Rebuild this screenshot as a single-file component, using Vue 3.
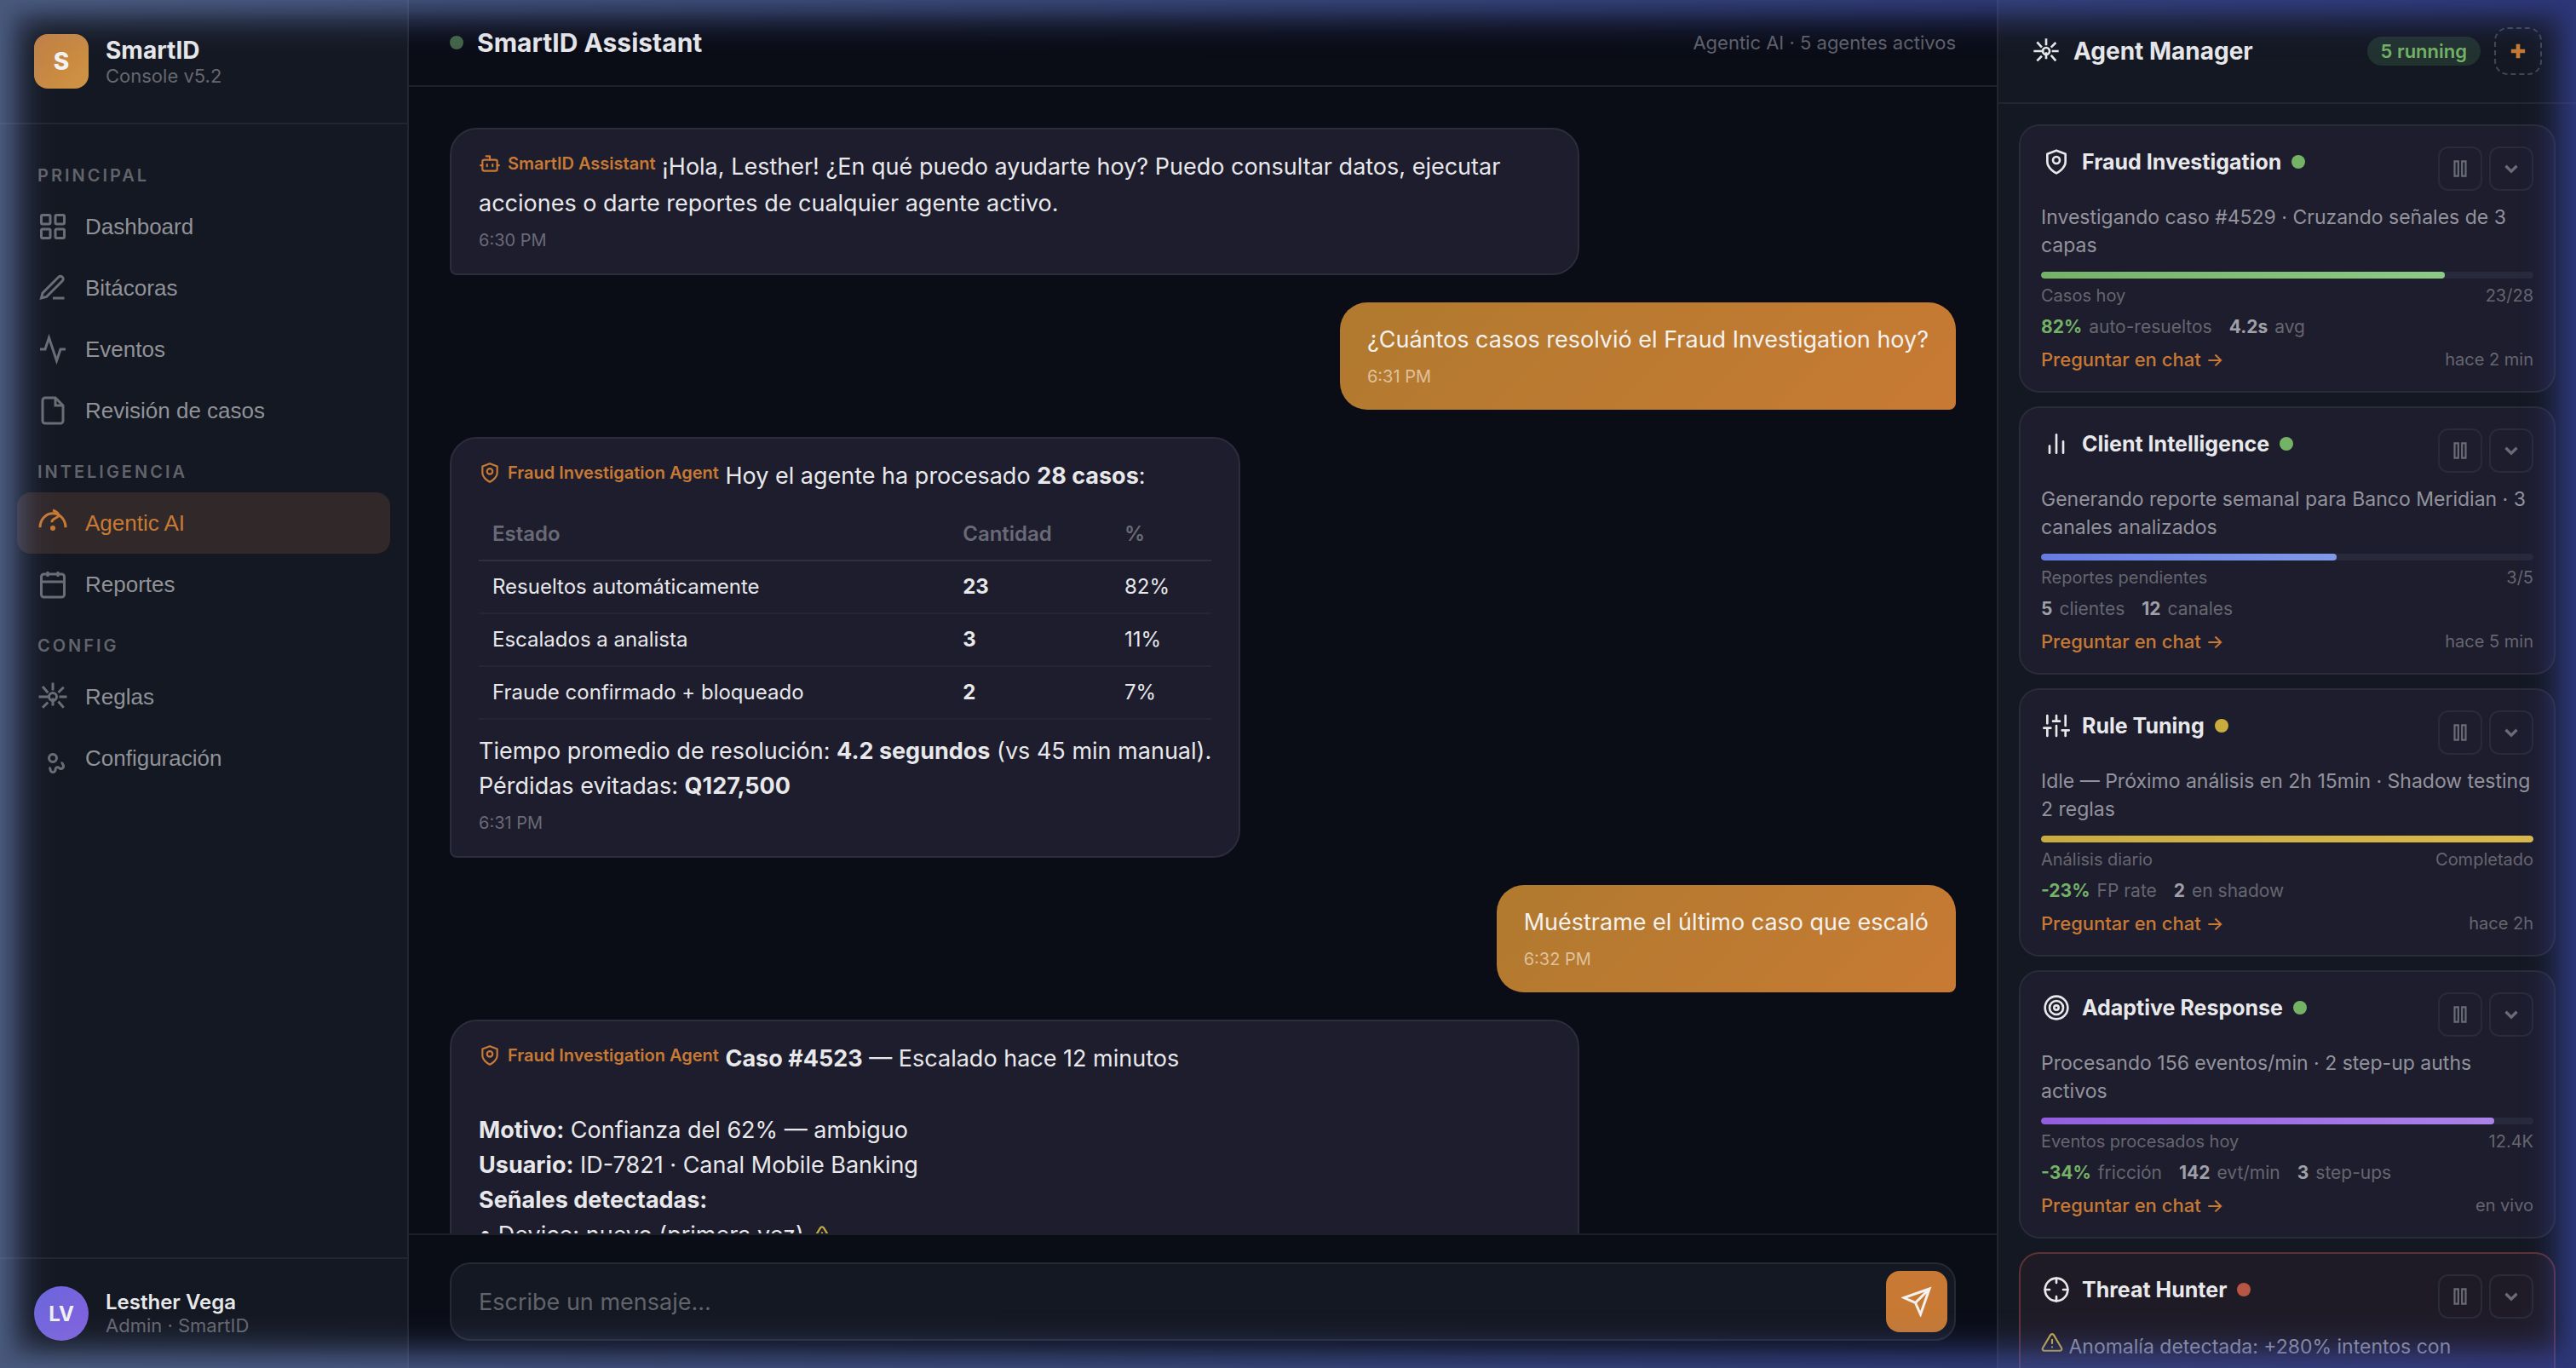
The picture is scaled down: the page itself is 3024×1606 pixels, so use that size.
<script setup>
import { ref } from 'vue'

const icons = {
  grid: '<rect x="3" y="3" width="7" height="7" rx="1"/><rect x="14" y="3" width="7" height="7" rx="1"/><rect x="3" y="14" width="7" height="7" rx="1"/><rect x="14" y="14" width="7" height="7" rx="1"/>',
  edit: '<path d="M12 20h9"/><path d="M16.5 3.5a2.12 2.12 0 0 1 3 3L7 19l-4 1 1-4z"/>',
  pulse: '<path d="M22 12h-4l-3 9L9 3l-3 9H2"/>',
  file: '<path d="M14 2H6a2 2 0 0 0-2 2v16a2 2 0 0 0 2 2h12a2 2 0 0 0 2-2V8z"/><path d="M14 2v6h6"/>',
  gauge: '<path d="M2 15.5a10 11 0 0 1 20 0"/><path d="M12 2c3 1 5 3 4.600 4.600L12 9.500c-.8.6-.8 1.200-.6 2"/><circle cx="12" cy="16" r="2" fill="currentColor" stroke="none"/>',
  calendar: '<rect x="3" y="4" width="18" height="18" rx="2"/><path d="M16 2v4M8 2v4M3 10h18"/>',
  spark: '<circle cx="12" cy="12" r="3"/><path d="M12 1v6M12 13v6M1 12h9M17 12h6M4 4l4.200 4.800M20.500 4.500l-4.200 4.200M4 20.500l4.200-4.200M20.500 20.500l-4.200-4.800"/>',
  gear: '<circle cx="12" cy="12" r="3"/><path d="M19.4 15a1.65 1.65 0 0 0 .33 1.82l.06.06a2 2 0 0 1 0 2.83 2 2 0 0 1-2.83 0l-.06-.06a1.65 1.65 0 0 0-1.82-.33 1.65 1.65 0 0 0-1 1.510V21a2 2 0 0 1-2 2 2 2 0 0 1-2-2v-.09A1.65 1.65 0 0 0 9 19.400"/>',
  bot: '<path d="M12 8V4H8"/><rect x="4" y="8" width="16" height="12" rx="2"/><path d="M2 14h2M20 14h2M15 13v2M9 13v2"/>',
  shield: '<path d="M12 22s8-4 8-10V5l-8-3-8 3v7c0 6 8 10 8 10z"/><circle cx="12" cy="10.500" r="3"/>',
  bars: '<path d="M18 20V10M12 20V4M6 20v-6"/>',
  sliders: '<path d="M4 21v-7M4 10V3M12 21v-9M12 8V3M20 21v-5M20 12V3M1 14h6M9 8h6M17 16h6"/>',
  target: '<circle cx="12" cy="12" r="10"/><circle cx="12" cy="12" r="6"/><circle cx="12" cy="12" r="2"/>',
  crosshair: '<circle cx="12" cy="12" r="10"/><path d="M22 12h-4M6 12H2M12 6V2M12 22v-4"/>',
  warning: '<path d="M10.29 3.860 1.820 18a2 2 0 0 0 1.710 3h16.940a2 2 0 0 0 1.710-3L13.710 3.860a2 2 0 0 0-3.420 0z"/><path d="M12 9v4M12 17h.01"/>',
}

const navGroups = [
  {
    title: 'Principal',
    items: [
      { label: 'Dashboard', icon: 'grid' },
      { label: 'Bitácoras', icon: 'edit' },
      { label: 'Eventos', icon: 'pulse' },
      { label: 'Revisión de casos', icon: 'file' },
    ],
  },
  {
    title: 'Inteligencia',
    items: [
      { label: 'Agentic AI', icon: 'gauge' },
      { label: 'Reportes', icon: 'calendar' },
    ],
  },
  {
    title: 'Config',
    items: [
      { label: 'Reglas', icon: 'spark' },
      { label: 'Configuración', icon: 'gear' },
    ],
  },
]
const current = ref('Agentic AI')
const draft = ref('')

const results = [
  { state: 'Resueltos automáticamente', count: 23, share: '82%' },
  { state: 'Escalados a analista', count: 3, share: '11%' },
  { state: 'Fraude confirmado + bloqueado', count: 2, share: '7%' },
]

const agents = [
  {
    name: 'Fraud Investigation', icon: 'shield', status: 'green',
    task: 'Investigando caso #4529 · Cruzando señales de 3 capas',
    bar: 'green', progress: 82, metric: 'Casos hoy', value: '23/28',
    stats: [{ n: '82%', t: 'auto-resueltos', good: true }, { n: '4.2s', t: 'avg' }],
    time: 'hace 2 min',
  },
  {
    name: 'Client Intelligence', icon: 'bars', status: 'green',
    task: 'Generando reporte semanal para Banco Meridian · 3 canales analizados',
    bar: 'blue', progress: 60, metric: 'Reportes pendientes', value: '3/5',
    stats: [{ n: '5', t: 'clientes' }, { n: '12', t: 'canales' }],
    time: 'hace 5 min',
  },
  {
    name: 'Rule Tuning', icon: 'sliders', status: 'yellow',
    task: 'Idle — Próximo análisis en 2h 15min · Shadow testing 2 reglas',
    bar: 'yellow', progress: 100, metric: 'Análisis diario', value: 'Completado',
    stats: [{ n: '-23%', t: 'FP rate', good: true }, { n: '2', t: 'en shadow' }],
    time: 'hace 2h',
  },
  {
    name: 'Adaptive Response', icon: 'target', status: 'green',
    task: 'Procesando 156 eventos/min · 2 step-up auths activos',
    bar: 'purple', progress: 92, metric: 'Eventos procesados hoy', value: '12.4K',
    stats: [{ n: '-34%', t: 'fricción', good: true }, { n: '142', t: 'evt/min' }, { n: '3', t: 'step-ups' }],
    time: 'en vivo',
  },
  {
    name: 'Threat Hunter', icon: 'crosshair', status: 'red', alert: true,
    task: 'Anomalía detectada: +280% intentos con',
  },
]
</script>

<template>
  <div class="app">
    <aside class="sidebar">
      <div class="brand">
        <div class="logo">S</div>
        <div>
          <div class="brand-name">SmartID</div>
          <div class="sub">Console v5.2</div>
        </div>
      </div>
      <nav class="nav">
        <template v-for="group in navGroups" :key="group.title">
          <h2 class="nav-title">{{ group.title }}</h2>
          <button
            v-for="item in group.items"
            :key="item.label"
            type="button"
            class="nav-item"
            :class="{ active: item.label === current }"
            @click="current = item.label"
          >
            <svg class="icon nav-icon" viewBox="0 0 24 24" aria-hidden="true" v-html="icons[item.icon]"></svg>
            {{ item.label }}
          </button>
        </template>
      </nav>
      <div class="user">
        <div class="avatar">LV</div>
        <div>
          <div class="user-name">Lesther Vega</div>
          <div class="sub">Admin · SmartID</div>
        </div>
      </div>
    </aside>

    <main class="chat">
      <header class="chat-head">
        <span class="dot online"></span>
        <h1 class="chat-title">SmartID Assistant</h1>
        <span class="chat-info">Agentic AI · 5 agentes activos</span>
      </header>

      <section class="messages">
        <article class="bubble bot">
          <span class="tag"><svg class="icon round tag-icon" viewBox="0 0 24 24" aria-hidden="true" v-html="icons.bot"></svg>SmartID Assistant</span>
          ¡Hola, Lesther! ¿En qué puedo ayudarte hoy? Puedo consultar datos, ejecutar acciones o darte reportes de cualquier agente activo.
          <div class="time">6:30 PM</div>
        </article>

        <article class="bubble me">
          ¿Cuántos casos resolvió el Fraud Investigation hoy?
          <div class="time">6:31 PM</div>
        </article>

        <article class="bubble bot">
          <span class="tag"><svg class="icon round tag-icon" viewBox="0 0 24 24" aria-hidden="true" v-html="icons.shield"></svg>Fraud Investigation Agent</span>
          Hoy el agente ha procesado <strong>28 casos</strong>:
          <table class="results">
            <thead>
              <tr><th>Estado</th><th>Cantidad</th><th>%</th></tr>
            </thead>
            <tbody>
              <tr v-for="row in results" :key="row.state">
                <td>{{ row.state }}</td>
                <td><strong>{{ row.count }}</strong></td>
                <td>{{ row.share }}</td>
              </tr>
            </tbody>
          </table>
          Tiempo promedio de resolución: <strong>4.2 segundos</strong> (vs 45 min manual).<br />
          Pérdidas evitadas: <strong>Q127,500</strong>
          <div class="time">6:31 PM</div>
        </article>

        <article class="bubble me">
          Muéstrame el último caso que escaló
          <div class="time">6:32 PM</div>
        </article>

        <article class="bubble bot wide">
          <span class="tag"><svg class="icon round tag-icon" viewBox="0 0 24 24" aria-hidden="true" v-html="icons.shield"></svg>Fraud Investigation Agent</span>
          {{ ' ' }}<strong>Caso #4523</strong> — Escalado hace 12 minutos<br /><br />
          <strong>Motivo:</strong> Confianza del 62% — ambiguo<br />
          <strong>Usuario:</strong> ID-7821 · Canal Mobile Banking<br />
          <strong>Señales detectadas:</strong><br />
          • Device: nuevo (primera vez)
          <svg class="icon round inline-warn" viewBox="0 0 24 24" aria-hidden="true" v-html="icons.warning"></svg>
        </article>
      </section>

      <form class="composer" @submit.prevent="draft = ''">
        <div class="field">
          <input v-model="draft" type="text" placeholder="Escribe un mensaje..." aria-label="Mensaje" />
          <button type="submit" class="send" aria-label="Enviar">
            <svg class="icon" viewBox="0 0 24 24" aria-hidden="true"><path d="M22 2 11 13M22 2l-7 20-4-9-9-4z" /></svg>
          </button>
        </div>
      </form>
    </main>

    <aside class="panel">
      <header class="panel-head">
        <svg class="icon panel-icon" viewBox="0 0 24 24" aria-hidden="true" v-html="icons.spark"></svg>
        <h2 class="panel-title">Agent Manager</h2>
        <span class="badge">5 running</span>
        <button type="button" class="add" aria-label="Agregar agente">
          <svg class="icon" viewBox="0 0 24 24" aria-hidden="true"><path d="M12 5v14M5 12h14" /></svg>
        </button>
      </header>
      <div class="agents">
        <article v-for="agent in agents" :key="agent.name" class="card" :class="{ danger: agent.alert }">
          <div class="card-head">
            <div class="card-name">
              <span class="card-icon"><svg class="icon round" viewBox="0 0 24 24" aria-hidden="true" v-html="icons[agent.icon]"></svg></span>
              <h3>{{ agent.name }}</h3>
              <span class="dot" :class="agent.status"></span>
            </div>
            <div class="card-actions">
              <button type="button" aria-label="Pausar">
                <svg class="icon" viewBox="0 0 24 24" aria-hidden="true"><path d="M6 4h4v16H6zM14 4h4v16h-4z" /></svg>
              </button>
              <button type="button" aria-label="Expandir">
                <svg class="icon chevron" viewBox="0 0 24 24" aria-hidden="true"><path d="m6 9 6 6 6-6" /></svg>
              </button>
            </div>
          </div>
          <p class="task">
            <svg v-if="agent.alert" class="icon round warn-icon" viewBox="0 0 24 24" aria-hidden="true" v-html="icons.warning"></svg>
            {{ agent.task }}
          </p>
          <template v-if="agent.bar">
            <div class="track"><div class="fill" :class="agent.bar" :style="{ width: agent.progress + '%' }"></div></div>
            <div class="metric"><span>{{ agent.metric }}</span><span>{{ agent.value }}</span></div>
            <div class="stats">
              <span v-for="stat in agent.stats" :key="stat.t" class="stat">
                <strong :class="{ good: stat.good }">{{ stat.n }}</strong>{{ stat.t }}
              </span>
            </div>
            <div class="card-foot">
              <a href="#chat">Preguntar en chat →</a>
              <span>{{ agent.time }}</span>
            </div>
          </template>
        </article>
      </div>
    </aside>

    <div class="glow"></div>
  </div>
</template>

<style>
body {
  margin: 0;
  background: #0a0c16;
}
</style>

<style scoped>
* {
  box-sizing: border-box;
}
.app {
  display: flex;
  height: 100vh;
  overflow: hidden;
  background: #0a0c16;
  color: #e8e8ea;
  font-family: Inter, "Noto Sans", sans-serif;
  -webkit-font-smoothing: antialiased;
}
h1, h2, h3, p {
  margin: 0;
}
button {
  margin: 0;
  padding: 0;
  cursor: pointer;
}
.icon {
  flex: none;
  fill: none;
  stroke: currentColor;
  stroke-width: 2;
}
.round {
  stroke-linecap: round;
  stroke-linejoin: round;
}
.dot {
  flex: none;
  width: 16px;
  height: 16px;
  border-radius: 50%;
}

/* Sidebar */
.sidebar {
  display: flex;
  flex: none;
  flex-direction: column;
  width: 480px;
  background: #141822;
  border-right: 2px solid #23252f;
}
.brand {
  display: flex;
  align-items: center;
  gap: 20px;
  padding: 40px;
  border-bottom: 2px solid #23252f;
}
.logo {
  display: grid;
  place-items: center;
  width: 64px;
  height: 64px;
  border-radius: 16px;
  background: linear-gradient(135deg, #c47f3c, #cf9445);
  color: #f2f2f2;
  font-size: 28px;
  font-weight: 800;
}
.brand-name {
  font-size: 28px;
  font-weight: 700;
  line-height: 34px;
}
.sub {
  color: #66676f;
  font-size: 22px;
  line-height: 27px;
}
.nav {
  flex: 1;
  padding: 24px 20px;
}
.nav-title {
  padding: 24px 24px 12px;
  color: #62636b;
  font-size: 20px;
  font-weight: 600;
  letter-spacing: 3px;
  line-height: 24px;
  text-transform: uppercase;
}
.nav-item {
  display: flex;
  align-items: center;
  gap: 20px;
  width: 100%;
  height: 72px;
  padding: 0 24px;
  border: 0;
  border-radius: 16px;
  background: none;
  color: #919298;
  font: 26px "Liberation Sans", Arial, sans-serif;
  text-align: left;
}
.nav-icon {
  width: 36px;
  height: 36px;
  opacity: 0.7;
}
.nav-item.active {
  background: #31282a;
  color: #c87a34;
}
.active .nav-icon {
  opacity: 1;
}
.user {
  display: flex;
  align-items: center;
  gap: 20px;
  padding: 32px 40px;
  border-top: 2px solid #23252f;
}
.avatar {
  display: grid;
  place-items: center;
  width: 64px;
  height: 64px;
  border-radius: 50%;
  background: linear-gradient(135deg, #6a66dc, #8462de);
  color: #f2f2f2;
  font-size: 24px;
  font-weight: 700;
}
.user-name {
  font-size: 24px;
  font-weight: 600;
  line-height: 29px;
}

/* Chat */
.chat {
  display: flex;
  flex: 1;
  flex-direction: column;
  min-width: 0;
}
.chat-head {
  display: flex;
  align-items: center;
  gap: 16px;
  padding: 32px 48px;
  border-bottom: 2px solid #1c1e28;
}
.online {
  background: #436345;
}
.chat-title {
  font-size: 30px;
  font-weight: 700;
  line-height: 36px;
}
.chat-info {
  margin-left: auto;
  color: #5f6069;
  font-size: 22px;
}
.messages {
  display: flex;
  flex: 1;
  flex-direction: column;
  align-items: flex-start;
  gap: 32px;
  min-height: 0;
  padding: 48px 48px 0;
  overflow: hidden;
}
.bubble {
  flex: none;
  max-width: 75%;
  padding: 23px 32px 24px;
  border-radius: 32px;
  font-size: 27px;
  line-height: 41px;
}
.bot {
  border: 2px solid #2c2d3b;
  border-bottom-left-radius: 8px;
  background: #1d1d2e;
}
.me {
  align-self: flex-end;
  border-bottom-right-radius: 8px;
  background: linear-gradient(135deg, #b07a2e, #c87a34);
  color: #f4f1ee;
}
.wide {
  width: 75%;
}
.tag {
  display: inline-flex;
  align-items: center;
  gap: 8px;
  margin-bottom: 10px;
  color: #c87a34;
  font-size: 20px;
  font-weight: 600;
  line-height: 32px;
}
.tag-icon,
.warn-icon {
  width: 26px;
  height: 26px;
}
.warn-icon,
.inline-warn {
  color: #c4aa42;
}
.inline-warn {
  width: 28px;
  height: 28px;
  vertical-align: -6px;
}
.time {
  margin-top: 8px;
  color: #6a6a76;
  font-size: 20px;
  line-height: 30px;
}
.me .time {
  color: #dfc19c;
}
.results {
  width: 100%;
  margin: 16px 0;
  border-collapse: collapse;
  font-size: 24px;
  line-height: 36px;
}
.results th,
.results td {
  padding: 12px 16px;
  border-bottom: 2px solid #252634;
  text-align: left;
}
.results th {
  border-bottom-color: #2f303e;
  color: #6a6a76;
  font-weight: 600;
}
.composer {
  padding: 32px 48px;
  border-top: 2px solid #1c1e28;
}
.field {
  display: flex;
  align-items: center;
  padding: 8px 8px 8px 32px;
  border: 2px solid #262833;
  border-radius: 24px;
  background: #141822;
}
.field input {
  flex: 1;
  min-width: 0;
  padding: 0;
  border: 0;
  outline: 0;
  background: none;
  color: inherit;
  font: inherit;
  font-size: 27px;
}
.field input::placeholder {
  color: #62636b;
  opacity: 1;
}
.send {
  display: grid;
  place-items: center;
  width: 72px;
  height: 72px;
  border: 0;
  border-radius: 16px;
  background: #c87a34;
  color: #f4f1ee;
}
.send .icon {
  width: 36px;
  height: 36px;
}

/* Agent panel */
.panel {
  display: flex;
  flex: none;
  flex-direction: column;
  width: 680px;
  border-left: 2px solid #23252f;
  background: #141822;
}
.panel-head {
  display: flex;
  align-items: center;
  gap: 16px;
  padding: 32px 40px;
  border-bottom: 2px solid #23252f;
}
.panel-icon {
  width: 32px;
  height: 32px;
}
.panel-title {
  flex: 1;
  font-size: 28px;
  font-weight: 700;
}
.badge {
  padding: 4px 16px;
  border-radius: 20px;
  background: #22322f;
  color: #74b266;
  font-size: 22px;
  font-weight: 600;
  line-height: 26px;
}
.add {
  display: grid;
  place-items: center;
  width: 56px;
  height: 56px;
  border: 2px dashed #434550;
  border-radius: 16px;
  background: none;
  color: #c87a34;
}
.add .icon {
  width: 28px;
  height: 28px;
  stroke-width: 4;
}
.agents {
  display: flex;
  flex: 1;
  flex-direction: column;
  gap: 16px;
  min-height: 0;
  padding: 24px 24px 0;
  overflow: hidden;
}
.card {
  flex: none;
  padding: 24px;
  border: 2px solid #2a2b39;
  border-radius: 24px;
  background: #1d1d2e;
}
.danger {
  border-color: #5c3236;
  background: #1f1b26;
}
.card-head {
  display: flex;
  align-items: flex-start;
  justify-content: space-between;
}
.card-name {
  display: flex;
  align-items: center;
  gap: 12px;
  height: 36px;
}
.card-name h3 {
  font-size: 25px;
  font-weight: 700;
}
.card-icon {
  display: grid;
  place-items: center;
  width: 36px;
}
.card-icon .icon {
  width: 32px;
  height: 32px;
}
.dot.green {
  background: #74b266;
}
.dot.yellow {
  background: #c9ac40;
}
.dot.red {
  background: #b85644;
}
.card-actions {
  display: flex;
  gap: 8px;
}
.card-actions button {
  display: grid;
  place-items: center;
  width: 52px;
  height: 52px;
  border: 2px solid #2a2b39;
  border-radius: 12px;
  background: none;
  color: #6a6b76;
}
.card-actions .icon {
  width: 26px;
  height: 26px;
}
.card-actions .chevron {
  stroke-width: 3;
}
.task {
  margin: 15px 0 14px;
  color: #93939c;
  font-size: 23px;
  line-height: 33px;
}
.track {
  height: 8px;
  border-radius: 4px;
  background: #28293a;
  overflow: hidden;
}
.fill {
  height: 8px;
  border-radius: 4px;
}
.fill.green {
  background: linear-gradient(90deg, #74b266, #8ccb84);
}
.fill.blue {
  background: linear-gradient(90deg, #667ce2, #809ae8);
}
.fill.yellow {
  background: linear-gradient(90deg, #c9ac40, #dab94c);
}
.fill.purple {
  background: linear-gradient(90deg, #925edf, #aa82e8);
}
.metric,
.card-foot {
  display: flex;
  align-items: center;
  justify-content: space-between;
  color: #66666f;
  font-size: 20px;
}
.metric {
  margin-top: 8px;
  line-height: 24px;
}
.stats {
  display: flex;
  gap: 20px;
  margin-top: 12px;
  color: #66666f;
  font-size: 21px;
  line-height: 26px;
}
.stat {
  display: flex;
  gap: 8px;
}
.stat strong {
  color: #a0a0a8;
}
.stat .good {
  color: #74b266;
}
.card-foot {
  margin-top: 12px;
  line-height: 26px;
}
.card-foot a {
  color: #c87a34;
  font-size: 22px;
  font-weight: 500;
  text-decoration: none;
}

/* Ambient light around the window edges */
.glow {
  --fade: #000, rgba(0, 0, 0, 0.76) 13px, rgba(0, 0, 0, 0.44) 25px, rgba(0, 0, 0, 0.18) 38px, rgba(0, 0, 0, 0.06) 50px, transparent 70px;
  position: fixed;
  inset: 0;
  background: linear-gradient(90deg, #7c98d6, #5e78d0 50%, #4656ce);
  -webkit-mask-image: linear-gradient(to right, var(--fade)), linear-gradient(to left, var(--fade)), linear-gradient(to bottom, var(--fade)), linear-gradient(to top, var(--fade));
  mask-image: linear-gradient(to right, var(--fade)), linear-gradient(to left, var(--fade)), linear-gradient(to bottom, var(--fade)), linear-gradient(to top, var(--fade));
  opacity: 0.5;
  pointer-events: none;
}
</style>
